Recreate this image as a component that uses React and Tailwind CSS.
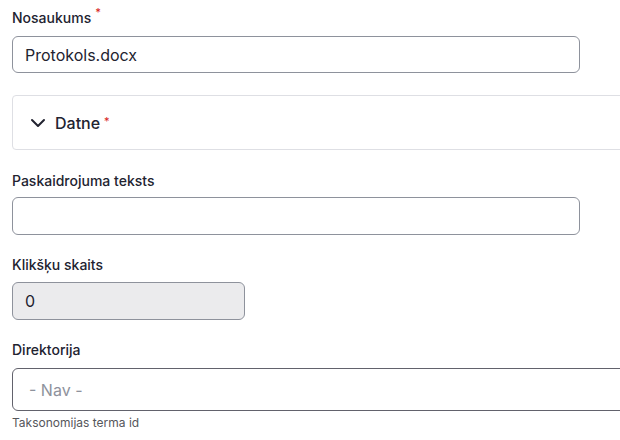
import { ChevronDown } from 'lucide-react'

const Req = () => (
  <span className="ml-[4px] text-[#d72222] text-[11px] align-top leading-none relative -top-[1px]">*</span>
)

const Label = ({ children, required }) => (
  <label className="block h-5 text-[14px] leading-5 font-medium text-[#222330]">
    {children}
    {required && <Req />}
  </label>
)

export default function App() {
  return (
    <div className="w-[620px] h-[440px] overflow-hidden bg-white pl-3 pt-2 font-['Inter',sans-serif] text-[#222330]">
      <Label required>Nosaukums</Label>
      <input
        defaultValue="Protokols.docx"
        className="mt-[8px] block w-[568px] h-[37px] px-3 text-[16px] text-[#222330] border border-[#8e929c] rounded-[6px] outline-none bg-white"
      />

      <div className="mt-[22px] w-[640px] h-[55px] border border-[#dedfe4] rounded-[4px] flex items-center pl-[13px]">
        <ChevronDown className="w-6 h-6 text-[#222330]" strokeWidth={2} />
        <span className="ml-[5px] text-[16px] font-medium">Datne</span>
        <Req />
      </div>

      <div className="mt-[21px]">
        <Label>Paskaidrojuma teksts</Label>
      </div>
      <input className="mt-[6px] block w-[568px] h-[38px] px-3 text-[16px] border border-[#8e929c] rounded-[6px] outline-none bg-white" />

      <div className="mt-[20px]">
        <Label>Klikšķu skaits</Label>
      </div>
      <input
        defaultValue="0"
        disabled
        className="mt-[7px] block w-[233px] h-[38px] px-3 text-[16px] text-[#222330] border border-[#8e929c] rounded-[6px] outline-none bg-[#ebebed]"
      />

      <div className="mt-[20px]">
        <Label>Direktorija</Label>
      </div>
      <div className="mt-[8px] w-[640px] h-[43px] border-[1.5px] border-[#62626c] rounded-[6px] flex items-center pl-[16px] text-[16px] text-[#8e929c]">
        - Nav -
      </div>
      <div className="mt-[4px] text-[12px] leading-4 text-[#55565b]">Taksonomijas terma id</div>
    </div>
  )
}
